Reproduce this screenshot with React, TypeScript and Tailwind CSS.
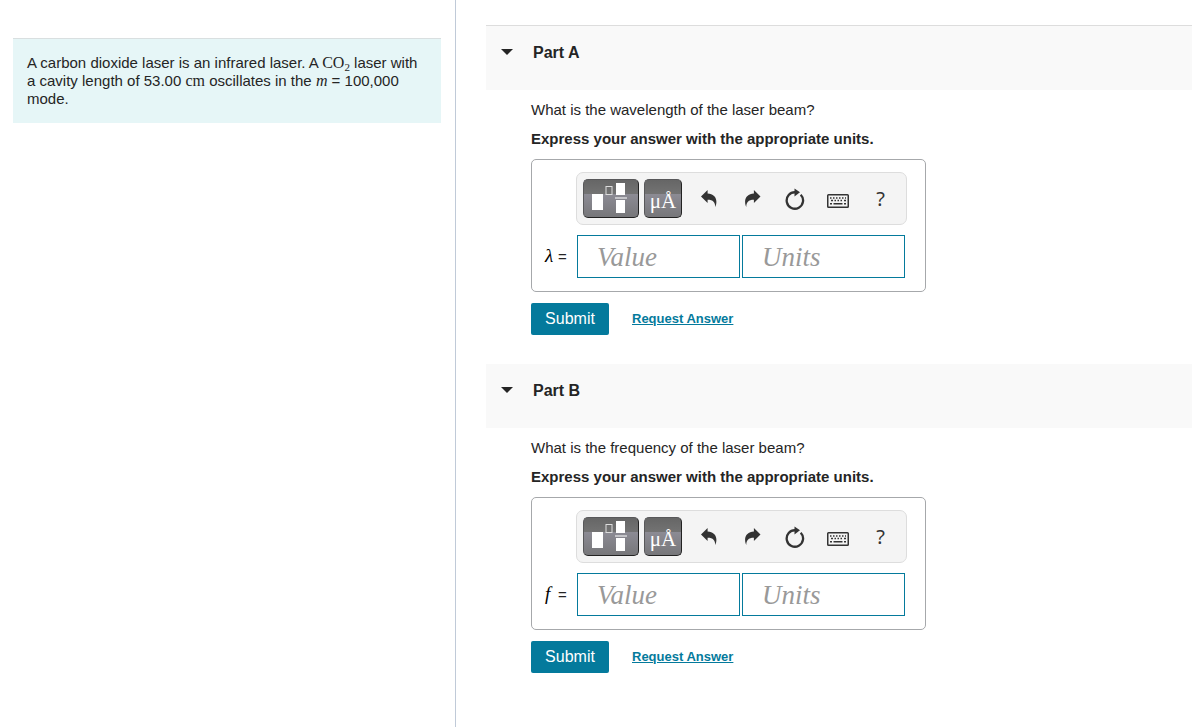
type PartProps = {
  title: string;
  question: string;
  symbol: string;
  id: string;
  first?: boolean;
};

function TemplatesIcon() {
  return (
    <svg width="38" height="31" viewBox="0 0 38 31" fill="none" aria-hidden="true">
      <rect y="11" width="11" height="16" fill="#fff" />
      <rect x="14" y="3.5" width="6" height="8" stroke="#ddd" />
      <rect x="24" width="9" height="12" fill="#fff" />
      <rect x="23" y="14" width="12" height="2" fill="#c4c4c8" />
      <rect x="24" y="17" width="9" height="13" fill="#fff" />
    </svg>
  );
}

function UndoIcon() {
  return (
    <svg width="18" height="20" viewBox="0 0 18 20" fill="#333" aria-hidden="true">
      <path d="M1 7.5 7.6 1v3.5c5.4.3 8.8 3.4 8.8 8.2 0 1.8-.4 3.8-1.2 5.3.1-4.6-2-7.2-7.6-7.2V14Z" />
    </svg>
  );
}

function RedoIcon() {
  return (
    <svg width="18" height="20" viewBox="0 0 18 20" fill="#333" aria-hidden="true">
      <path d="M17.5 7.5 10.9 1v3.5c-5.4.3-8.8 3.4-8.8 8.2 0 1.8.4 3.8 1.2 5.3-.1-4.6 2-7.2 7.6-7.2V14Z" />
    </svg>
  );
}

function ResetIcon() {
  return (
    <svg width="20" height="22" viewBox="0 0 20 22" fill="none" aria-hidden="true">
      <path d="M15.7 6.7A8.2 8.2 0 1 1 10.5 4.3" stroke="#333" strokeWidth="2.3" />
      <path d="M9.5 0.5 15 4.2 9.5 8.5Z" fill="#333" />
    </svg>
  );
}

function KeyboardIcon() {
  return (
    <svg width="22" height="14" viewBox="0 0 22 14" fill="none" aria-hidden="true">
      <rect x="0.75" y="0.75" width="20.5" height="12.5" rx="0.8" stroke="#333" strokeWidth="1.5" />
      <path d="M3 4h1.5M6 4h1.5M9 4h1.5M12 4h1.5M15 4h1.5M18 4h1M4 6.5h2M7.5 6.5h1.5M10.5 6.5h1.5M13.5 6.5h1.5M17 6.5h2M3 9.7h2M6.5 9.7h9M17 9.7h2" stroke="#333" strokeWidth="1.4" />
    </svg>
  );
}

const darkButton =
  'flex h-[39px] items-center justify-center rounded-[5px] border border-[#58585a] border-r-[#222] border-b-[#222] bg-[linear-gradient(#666_0,#737373_38%,#8c8b94_38%,#77777a_100%)]';
const iconButton = 'flex h-[39px] w-[43px] items-center justify-center';
const field =
  'h-[43px] w-[163px] border border-[#047a9c] bg-white px-[19px] pt-[2px] font-["Liberation_Serif",serif] text-[27px] italic placeholder:text-[#999]';

function Part({ title, question, symbol, id, first }: PartProps) {
  return (
    <section className="pb-[29px]">
      <h2 className={first ? 'border-t border-[#ddd] bg-[#f9f9f9]' : 'bg-[#f9f9f9]'}>
        <button type="button" className="flex h-16 w-full items-start pt-[14px] pl-[15px] text-left font-bold">
          <svg width="12" height="6" viewBox="0 0 12 6" className="mt-[9px] mr-5 shrink-0" fill="#252525" aria-hidden="true">
            <path d="M0 0h12L6 6Z" />
          </svg>
          <span className="text-[16px] leading-[26px]">{title}</span>
        </button>
      </h2>
      <div className="pt-[11px] pl-[45px] text-[15px] leading-[18px]">
        <p>{question}</p>
        <p className="mt-[11px] font-bold">Express your answer with the appropriate units.</p>
        <form onSubmit={(e) => e.preventDefault()}>
          <div className="mt-[11px] w-[395px] rounded-[5px] border border-[#a6a8ab] pt-3 pb-[13px] pl-[13px]">
            <div className="ml-[31px] flex h-[53px] w-[331px] items-center rounded-[7px] border border-[#ddd] bg-[#f4f4f4] pl-[6px]">
              <button type="button" aria-label="Templates" className={`${darkButton} w-[56px]`}>
                <TemplatesIcon />
              </button>
              <button type="button" aria-label="Units symbols" className={`${darkButton} mx-[5px] w-[38px] pt-1 font-["Liberation_Serif",serif] text-[21px] text-white`}>
                μÅ
              </button>
              <button type="button" aria-label="Undo" className={iconButton}><UndoIcon /></button>
              <button type="button" aria-label="Redo" className={iconButton}><RedoIcon /></button>
              <button type="button" aria-label="Reset" className={iconButton}><ResetIcon /></button>
              <button type="button" aria-label="Keyboard shortcuts" className={`${iconButton} pt-1`}><KeyboardIcon /></button>
              <button type="button" aria-label="Help" className={`${iconButton} font-['Noto_Sans',sans-serif] text-[20px] text-[#333]`}>?</button>
            </div>
            <div className="mt-[10px] flex items-center">
              <label htmlFor={`${id}-value`} className="flex w-8 shrink-0 items-baseline gap-[3px]">
                <i className="w-[10px] font-['Liberation_Serif',serif] text-[19px] text-black">{symbol}</i>
                <span>=</span>
              </label>
              <input id={`${id}-value`} placeholder="Value" className={field} />
              <input aria-label="Units" placeholder="Units" className={`${field} ml-[2px]`} />
            </div>
          </div>
          <div className="mt-[11px] flex items-center">
            <button type="submit" className="h-8 w-[78px] rounded-[2px] bg-[#047a9c] text-[16px] text-white">Submit</button>
            <a href="#request" className="ml-[23px] text-[13px] font-bold text-[#047a9c] underline">Request Answer</a>
          </div>
        </form>
      </div>
    </section>
  );
}

export default function App() {
  return (
    <div className="grid min-h-screen grid-cols-[57fr_92fr] bg-white font-['Liberation_Sans',Arial,sans-serif] text-[#252525]">
      <aside className="border-r border-[#c0cad8] pt-[38px] pr-[14px] pl-[13px]">
        <p className="border-t border-[#d9dfe0] bg-[#e6f6f7] px-[14px] py-[15px] text-[15px] leading-[18px]">
          A carbon dioxide laser is an infrared laser. A{' '}
          <span className="font-['Liberation_Serif',serif] text-[16px] leading-4">
            CO<sub className="text-[11px]">2</sub>
          </span>{' '}
          laser with a cavity length of 53.00 <span className="font-['Liberation_Serif',serif] text-[16px] leading-4">cm</span> oscillates in the{' '}
          <i className="font-['Liberation_Serif',serif] text-[16px] leading-4">m</i> = 100,000 mode.
        </p>
      </aside>
      <main className="pt-[25px] pl-[30px]">
        <Part id="part-a" title="Part A" question="What is the wavelength of the laser beam?" symbol="λ" first />
        <Part id="part-b" title="Part B" question="What is the frequency of the laser beam?" symbol="f" />
      </main>
    </div>
  );
}
